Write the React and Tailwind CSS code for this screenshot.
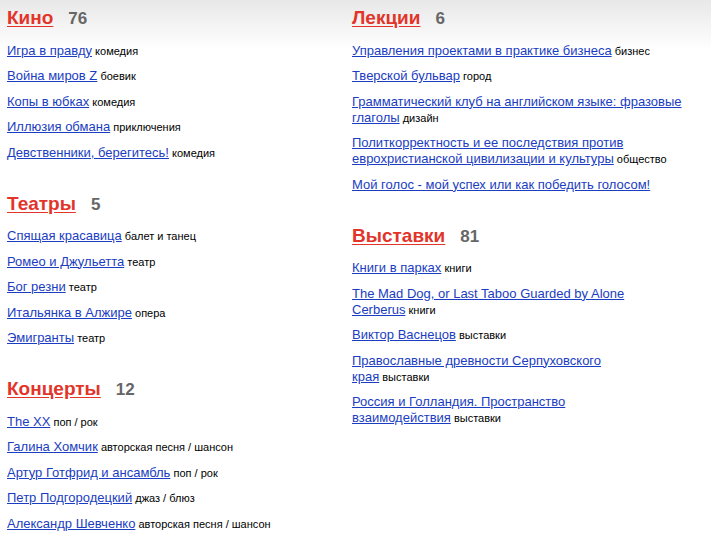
const left = [
  {
    title: 'Кино',
    count: 76,
    items: [
      ['Игра в правду', 'комедия'],
      ['Война миров Z', 'боевик'],
      ['Копы в юбках', 'комедия'],
      ['Иллюзия обмана', 'приключения'],
      ['Девственники, берегитесь!', 'комедия'],
    ],
  },
  {
    title: 'Театры',
    count: 5,
    items: [
      ['Спящая красавица', 'балет и танец'],
      ['Ромео и Джульетта', 'театр'],
      ['Бог резни', 'театр'],
      ['Итальянка в Алжире', 'опера'],
      ['Эмигранты', 'театр'],
    ],
  },
  {
    title: 'Концерты',
    count: 12,
    items: [
      ['The XX', 'поп / рок'],
      ['Галина Хомчик', 'авторская песня / шансон'],
      ['Артур Готфрид и ансамбль', 'поп / рок'],
      ['Петр Подгородецкий', 'джаз / блюз'],
      ['Александр Шевченко', 'авторская песня / шансон'],
    ],
  },
];

const right = [
  {
    title: 'Лекции',
    count: 6,
    width: 'max-w-[345px]',
    items: [
      ['Управления проектами в практике бизнеса', 'бизнес'],
      ['Тверской бульвар', 'город'],
      ['Грамматический клуб на английском языке: фразовые глаголы', 'дизайн'],
      ['Политкорректность и ее последствия против еврохристианской цивилизации и культуры', 'общество'],
      ['Мой голос - мой успех или как победить голосом!', ''],
    ],
  },
  {
    title: 'Выставки',
    count: 81,
    width: 'max-w-[276px]',
    items: [
      ['Книги в парках', 'книги'],
      ['The Mad Dog, or Last Taboo Guarded by Alone Cerberus', 'книги'],
      ['Виктор Васнецов', 'выставки'],
      ['Православные древности Серпуховского края', 'выставки'],
      ['Россия и Голландия. Пространство взаимодействия', 'выставки'],
    ],
  },
];

function Section({ section }) {
  return (
    <div className={section.width || ''}>
      <div className="flex items-baseline gap-[15px] leading-[22px]">
        <a href="#" className="text-[19px] font-bold text-[#e3342a] underline underline-offset-[2px]">
          {section.title}
        </a>
        <span className="text-[17px] font-bold text-[#666666]">{section.count}</span>
      </div>
      <ul className="mt-[12.5px] flex flex-col gap-[9.5px]">
        {section.items.map(([name, tag]) => (
          <li key={name} className="text-[13px] leading-4">
            <a href="#" className="text-[#1a3dc1] underline">
              {name}
            </a>
            {tag && <span className="text-[11px] leading-none text-black"> {tag}</span>}
          </li>
        ))}
      </ul>
    </div>
  );
}

export default function App() {
  return (
    <div className="w-[711px] min-h-[543px] bg-[linear-gradient(to_bottom,#e8e8e8,#ffffff_50px)] font-['Liberation_Sans',Arial,sans-serif]">
      <div className="grid grid-cols-[345px_1fr] pl-[7px] pt-[7px]">
        <div className="flex flex-col gap-8">
          {left.map((s) => (
            <Section key={s.title} section={s} />
          ))}
        </div>
        <div className="flex flex-col gap-8">
          {right.map((s) => (
            <Section key={s.title} section={s} />
          ))}
        </div>
      </div>
    </div>
  );
}
